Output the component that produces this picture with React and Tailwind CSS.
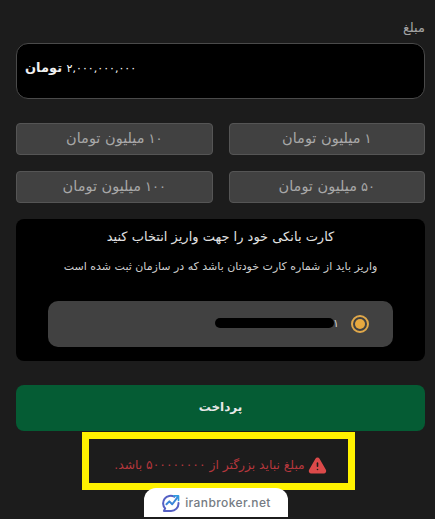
import React from 'react';
import { TriangleAlert } from 'lucide-react';

const amounts = [
  ['۱', 'میلیون تومان'],
  ['۱۰', 'میلیون تومان'],
  ['۵۰', 'میلیون تومان'],
  ['۱۰۰', 'میلیون تومان'],
];

const BrokerLogo = () => (
  <svg viewBox="0 0 24 24" className="w-[20px] h-[20px]" fill="none" strokeWidth="2.4" strokeLinecap="round" strokeLinejoin="round">
    <path d="M16 4.5A9 9 0 0 0 5 18.5L3.5 21.5H12A9 9 0 0 0 21 12" stroke="#5560c4" />
    <path d="M6.5 13.5L10 10l3.5 3.5L20 5" stroke="#3b86d8" />
    <path d="M15.5 3.5H21V9" stroke="#2f9be0" strokeWidth="2" />
  </svg>
);

export default function App() {
  return (
    <div dir="rtl" className="relative w-[435px] h-[519px] overflow-hidden bg-[#1c1c1c] pr-[10px] pl-[16px] font-['DejaVu_Sans','Noto_Sans',sans-serif]">
      <div className="pt-[19px] h-[43px] text-[13px] leading-[18px] text-[#a3a3a3]">مبلغ</div>

      <div className="h-[56px] rounded-[12px] border border-[#4a4a4a] bg-black flex items-center justify-end pl-[8px] pb-[6px]">
        <span className="text-[13px] font-bold text-[#f0f0f0]">
          <span className="text-[11px] font-normal tracking-[-0.2px] text-white">۲,۰۰۰,۰۰۰,۰۰۰</span> تومان
        </span>
      </div>

      <div className="mt-[24px] grid grid-cols-2 gap-x-[16px] gap-y-[16px]">
        {amounts.map(([n, label]) => (
          <div key={n} className="h-[32px] rounded-[4px] border border-[#555555] bg-[#414141] flex items-center justify-center gap-[4px] pb-[1px] text-[14.5px] text-[#a8a8a8]">
            <span className="text-[13px]">{n}</span>
            <span>{label}</span>
          </div>
        ))}
      </div>

      <div className="mt-[16px] h-[142px] rounded-[8px] bg-black flex flex-col items-center">
        <div className="mt-[8px] text-[13px] leading-[20px] text-[#e2e2e2]">کارت بانکی خود را جهت واریز انتخاب کنید</div>
        <div className="mt-[11px] text-[11px] leading-[18px] text-[#d0d0d0]">واریز باید از شماره کارت خودتان باشد که در سازمان ثبت شده است</div>
        <div className="mt-[25px] w-[345px] h-[46px] rounded-[10px] bg-[#414141] flex items-center pr-[24px]">
          <div className="w-[18px] h-[18px] rounded-full border-2 border-[#e0a84a] flex items-center justify-center">
            <div className="w-[10px] h-[10px] rounded-full bg-[#e8a93f]" />
          </div>
          <span className="mr-[12px] text-[11px] text-[#d0d0d0]">۱</span>
          <div className="mr-[-1px] mb-[3px] w-[119px] h-[10px] rounded-full bg-black" />
        </div>
      </div>

      <div className="mt-[24px] h-[46px] rounded-[8px] bg-[#055c34] flex items-center justify-center pb-[2px] text-[12px] font-bold text-[#e8e8e8]">
        پرداخت
      </div>

      <div className="ml-[66px] mr-[70px] mt-[1px] h-[58px] border-[7px] border-[#fff200] flex items-center justify-center gap-[3px] pt-[8px] pl-[4px]">
        <TriangleAlert className="w-[19px] h-[19px] fill-[#dc4a4a] text-[#dc4a4a] [&>path:nth-child(2)]:stroke-[#1c1c1c] [&>path:nth-child(3)]:stroke-[#1c1c1c]" />
        <span className="text-[12.3px] whitespace-nowrap text-[#b5373c]">مبلغ نباید بزرگتر از ۵۰۰۰۰۰۰۰۰ باشد.</span>
      </div>

      <div dir="ltr" className="absolute left-[144px] top-[488px] w-[144px] h-[29px] rounded-t-[12px] bg-white flex items-center justify-center gap-[4px]">
        <BrokerLogo />
        <span className="text-[12px] tracking-[0.4px] text-[#757b83] font-['Inter',sans-serif] font-medium">iranbroker.net</span>
      </div>
    </div>
  );
}
